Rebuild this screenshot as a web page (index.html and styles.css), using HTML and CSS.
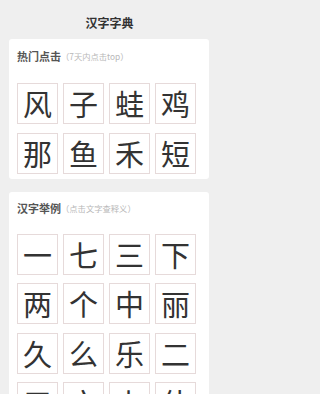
FILE: index.html
```html
<!DOCTYPE html>
<html lang="zh">
<head>
<meta charset="utf-8">
<link rel="stylesheet" href="styles.css">
</head>
<body>
<div class="page">
  <div class="title">汉字字典</div>
  <section class="card card-hot">
    <div class="head"><span class="h">热门点击</span><span class="sub">（7天内点击top）</span></div>
    <div class="grid">
      <div class="cell">风</div><div class="cell">子</div><div class="cell">蛙</div><div class="cell">鸡</div>
      <div class="cell">那</div><div class="cell">鱼</div><div class="cell">禾</div><div class="cell">短</div>
    </div>
  </section>
  <section class="card card-ex">
    <div class="head"><span class="h">汉字举例</span><span class="sub">（点击文字查释义）</span></div>
    <div class="grid">
      <div class="cell">一</div><div class="cell">七</div><div class="cell">三</div><div class="cell">下</div>
      <div class="cell">两</div><div class="cell">个</div><div class="cell">中</div><div class="cell">丽</div>
      <div class="cell">久</div><div class="cell">么</div><div class="cell">乐</div><div class="cell">二</div>
      <div class="cell">三</div><div class="cell">亡</div><div class="cell">上</div><div class="cell">什</div>
    </div>
  </section>
</div>
</body>
</html>
```
FILE: styles.css
```css
html, body {
  margin: 0;
  padding: 0;
  background: #efefef;
  font-family: "Noto Sans CJK SC", "Noto Sans", sans-serif;
  color: #333;
  overflow: hidden;
}
.page {
  width: 219px;
  height: 394px;
  overflow: hidden;
  background: #efefef;
}
.title {
  height: 39px;
  line-height: 46px;
  text-align: center;
  font-size: 12px;
  font-weight: 700;
  color: #333;
}
.card {
  background: #fff;
  margin: 0 10px 0 9px;
  border-radius: 3px;
}
.card-hot {
  padding: 10px 0 5px 8px;
}
.card-ex {
  margin-top: 13px;
  padding: 9px 0 10px 8px;
}
.head {
  height: 14px;
  line-height: 14px;
  display: flex;
  align-items: center;
}
.h {
  font-size: 11px;
  font-weight: 700;
  color: #555;
}
.sub {
  font-size: 8.3px;
  color: #b8b8b8;
  margin-left: 0;
}
.card-hot .grid {
  margin-top: 20px;
}
.card-ex .grid {
  margin-top: 19px;
}
.grid {
  display: grid;
  grid-template-columns: repeat(4, 41px);
  grid-auto-rows: 41px;
  column-gap: 5px;
  row-gap: 8.5px;
}
.cell {
  box-sizing: border-box;
  border: 1px solid #e6dada;
  display: flex;
  align-items: center;
  justify-content: center;
  font-size: 29px;
  line-height: 1;
  color: #333;
}
```
